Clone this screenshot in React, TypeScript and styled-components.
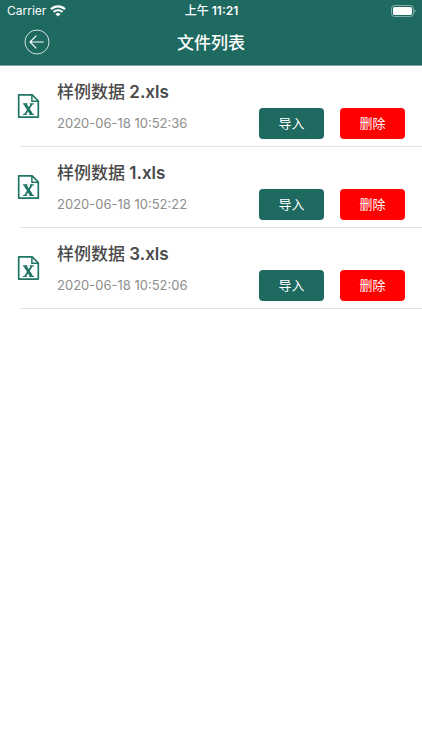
import React from "react";
import styled, { createGlobalStyle } from "styled-components";

const GREEN = "#1e6960";
const RED = "#ff0000";

const GlobalStyle = createGlobalStyle`
  *, *::before, *::after { box-sizing: border-box; }
  body {
    margin: 0;
    background: #fff;
    font-family: Inter, "Noto Sans CJK SC", sans-serif;
  }
`;

const Page = styled.div`
  min-height: 100vh;
  background: #fff;
`;

const Header = styled.header`
  background: ${GREEN};
  color: #fff;
  border-bottom: 1px solid #7fa39e;
`;

const StatusBar = styled.div`
  display: grid;
  grid-template-columns: 1fr auto 1fr;
  align-items: center;
  height: 22px;
  padding: 0 6px 0 7px;
  font-size: 12px;
  line-height: 22px;
`;

const Carrier = styled.div`
  display: flex;
  align-items: center;
  gap: 4px;
`;

const Clock = styled.time`
  font-weight: 600;
`;

const ClockPeriod = styled.span`
  font-weight: 500;
`;

const Battery = styled.svg`
  justify-self: end;
`;

const NavBar = styled.div`
  display: grid;
  grid-template-columns: 1fr auto 1fr;
  align-items: center;
  height: 43px;
  padding: 0 24px 3px;
`;

const BackButton = styled.button`
  display: flex;
  width: 26px;
  height: 26px;
  padding: 0;
  border: 0;
  background: none;
  color: inherit;
  cursor: pointer;
`;

const Title = styled.h1`
  margin: 0;
  padding-top: 2px;
  font-size: 17px;
  font-weight: 500;
  line-height: 24px;
`;

const FileList = styled.ul`
  margin: 0;
  padding: 0;
  list-style: none;
`;

const FileRow = styled.div`
  display: flex;
  padding-left: 17px;
`;

const FileIcon = styled.svg`
  flex: none;
  margin: 27px 17px 0 0;
`;

const RowBody = styled.div`
  flex: 1;
  display: grid;
  grid-template-columns: 1fr auto;
  padding: 14px 17px 7px 0;
`;

const Divider = styled.div`
  height: 1px;
  margin-left: 20px;
  background: #e3e3e3;
`;

const FileName = styled.h2`
  grid-column: 1 / -1;
  margin: 0;
  font-size: 17px;
  font-weight: 600;
  line-height: 24px;
  color: #4a4a4a;
`;

const NameText = styled.span`
  font-weight: 500;
`;

const FileDate = styled.time`
  padding-top: 4px;
  font-size: 13px;
  line-height: 31px;
  color: #8e8e8e;
`;

const Actions = styled.div`
  display: flex;
  gap: 16px;
  padding-top: 4px;
`;

const ActionButton = styled.button<{ $color: string }>`
  width: 65px;
  height: 31px;
  padding: 0;
  border: 0;
  border-radius: 4px;
  background: ${({ $color }) => $color};
  color: #fff;
  font: inherit;
  font-size: 13px;
  line-height: 31px;
  cursor: pointer;
`;

const files = [
  { name: "样例数据", suffix: "2.xls", date: "2020-06-18 10:52:36" },
  { name: "样例数据", suffix: "1.xls", date: "2020-06-18 10:52:22" },
  { name: "样例数据", suffix: "3.xls", date: "2020-06-18 10:52:06" },
];

function WifiIcon() {
  return (
    <svg width="16" height="12" viewBox="0 0 16 12" fill="none" stroke="#fff" aria-hidden="true">
      <path d="M1 4.3C4.9 0.5 11.1 0.5 15 4.3" strokeWidth="2.3" />
      <path d="M3.5 6.9C6 4.6 10 4.6 12.5 6.9" strokeWidth="2.1" />
      <path d="M5.4 8.9C6.9 7.6 9.1 7.6 10.6 8.9L8 11.5Z" fill="#fff" stroke="none" />
    </svg>
  );
}

function BatteryIcon() {
  return (
    <Battery width="25" height="12" viewBox="0 0 25 12" aria-hidden="true">
      <rect x="0.5" y="0.5" width="22" height="11" rx="3" fill="none" stroke="#fff" strokeOpacity="0.45" />
      <rect x="2" y="2" width="19" height="8" rx="1.6" fill="#fff" />
      <path d="M23.6 4.2C25 4.8 25 7.2 23.6 7.8Z" fill="#fff" fillOpacity="0.55" />
    </Battery>
  );
}

function BackIcon() {
  return (
    <svg width="26" height="26" viewBox="0 0 26 26" fill="none" stroke="#fff" aria-hidden="true">
      <circle cx="13" cy="13" r="12" strokeWidth="0.8" />
      <path d="M19.6 13H6.2M12.4 6.6L6 13L12.4 19.4" strokeWidth="1.2" />
    </svg>
  );
}

function ExcelIcon() {
  return (
    <FileIcon width="23" height="26" viewBox="0 0 23 26" fill="none" stroke="#1f7565" aria-hidden="true">
      <path d="M1.7 1.9H15.2L21.3 8V24.1H1.7Z" strokeWidth="1.7" strokeLinejoin="round" />
      <path d="M14.9 2V8.2H21.2" strokeWidth="1.5" />
      <path d="M8 11L14.6 21.4" strokeWidth="2.9" />
      <path d="M14.8 11L8 21.4" strokeWidth="1.8" />
      <path d="M6 10.9H10.4M12.8 10.9H16.8M6 21.5H9.8M12.4 21.5H17" strokeWidth="1.1" />
    </FileIcon>
  );
}

export default function App() {
  return (
    <Page>
      <GlobalStyle />
      <Header>
        <StatusBar>
          <Carrier>
            Carrier
            <WifiIcon />
          </Carrier>
          <Clock>
            <ClockPeriod>上午</ClockPeriod> 11:21
          </Clock>
          <BatteryIcon />
        </StatusBar>
        <NavBar>
          <BackButton type="button" aria-label="返回">
            <BackIcon />
          </BackButton>
          <Title>文件列表</Title>
        </NavBar>
      </Header>
      <FileList>
        {files.map((file) => (
          <li key={file.suffix}>
            <FileRow>
              <ExcelIcon />
              <RowBody>
                <FileName>
                  <NameText>{file.name}</NameText> {file.suffix}
                </FileName>
                <FileDate>{file.date}</FileDate>
                <Actions>
                  <ActionButton type="button" $color={GREEN}>导入</ActionButton>
                  <ActionButton type="button" $color={RED}>删除</ActionButton>
                </Actions>
              </RowBody>
            </FileRow>
            <Divider />
          </li>
        ))}
      </FileList>
    </Page>
  );
}
